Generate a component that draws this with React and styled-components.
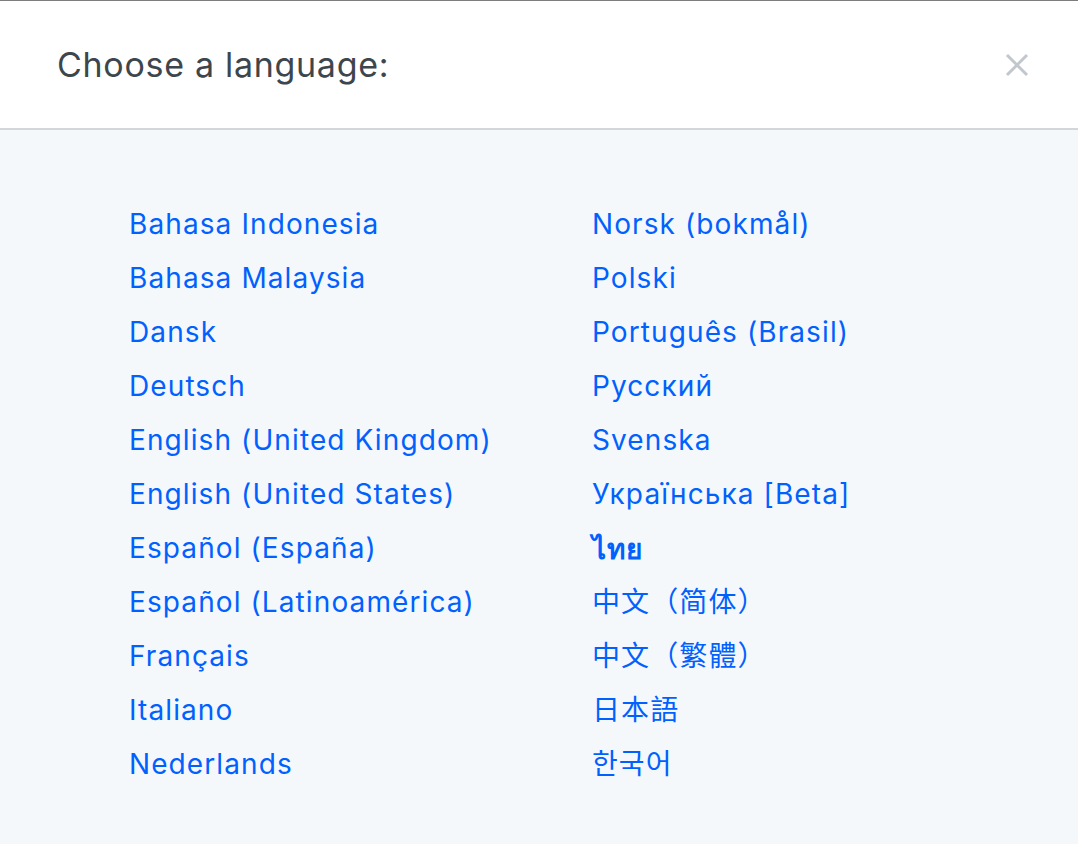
import React from "react";
import styled, { createGlobalStyle } from "styled-components";

const GlobalStyle = createGlobalStyle`
  html, body {
    margin: 0;
    padding: 0;
    background: #f5f8fb;
  }
  body {
    font-family: Inter, "Noto Sans CJK SC", sans-serif;
  }
`;

const Modal = styled.div`
  width: 1078px;
  height: 844px;
  display: flex;
  flex-direction: column;
  border-top: 1px solid #7d7d7d;
  box-sizing: border-box;
  background: #f5f8fb;
`;

const Header = styled.div`
  height: 129px;
  display: flex;
  align-items: center;
  justify-content: space-between;
  padding: 0 48px 0 57px;
  background: #ffffff;
  border-bottom: 2px solid #d3d7dc;
  box-sizing: border-box;
  flex-shrink: 0;
`;

const Title = styled.h1`
  margin: 0;
  font-size: 34px;
  font-weight: 400;
  color: #3d464d;
  letter-spacing: 0.7px;
`;

const CloseButton = styled.button`
  border: 0;
  background: none;
  padding: 0;
  width: 26px;
  height: 26px;
  display: flex;
  align-items: center;
  justify-content: center;
  cursor: pointer;
`;

const Body = styled.div`
  display: grid;
  grid-template-columns: 463px 463px;
  padding: 67px 0 0 129px;
`;

const Column = styled.ul`
  list-style: none;
  margin: 0;
  padding: 0;
  display: flex;
  flex-direction: column;
`;

const LangLink = styled.a`
  display: block;
  height: 54px;
  line-height: 54px;
  font-size: 28px;
  color: #0061fe;
  text-decoration: none;
  letter-spacing: 1.1px;
  font-family: ${({ $thai }) =>
    $thai ? '"Noto Sans", "DejaVu Sans", sans-serif' : "inherit"};
  font-weight: ${({ $thai }) => ($thai ? 700 : 400)};
`;

const left = [
  "Bahasa Indonesia",
  "Bahasa Malaysia",
  "Dansk",
  "Deutsch",
  "English (United Kingdom)",
  "English (United States)",
  "Español (España)",
  "Español (Latinoamérica)",
  "Français",
  "Italiano",
  "Nederlands",
];

const right = [
  "Norsk (bokmål)",
  "Polski",
  "Português (Brasil)",
  "Русский",
  "Svenska",
  "Українська [Beta]",
  "ไทย",
  "中文（简体）",
  "中文（繁體）",
  "日本語",
  "한국어",
];

const CloseIcon = () => (
  <svg width="24" height="24" viewBox="0 0 24 24">
    <path
      d="M2 2 L22 22 M22 2 L2 22"
      stroke="#c1c7cd"
      strokeWidth="3"
      fill="none"
    />
  </svg>
);

export default function App() {
  return (
    <>
      <GlobalStyle />
      <Modal>
        <Header>
          <Title>Choose a language:</Title>
          <CloseButton aria-label="Close">
            <CloseIcon />
          </CloseButton>
        </Header>
        <Body>
          <Column>
            {left.map((l) => (
              <li key={l}>
                <LangLink href="#">{l}</LangLink>
              </li>
            ))}
          </Column>
          <Column>
            {right.map((l) => (
              <li key={l}>
                <LangLink href="#" $thai={l === "ไทย"}>
                  {l}
                </LangLink>
              </li>
            ))}
          </Column>
        </Body>
      </Modal>
    </>
  );
}
